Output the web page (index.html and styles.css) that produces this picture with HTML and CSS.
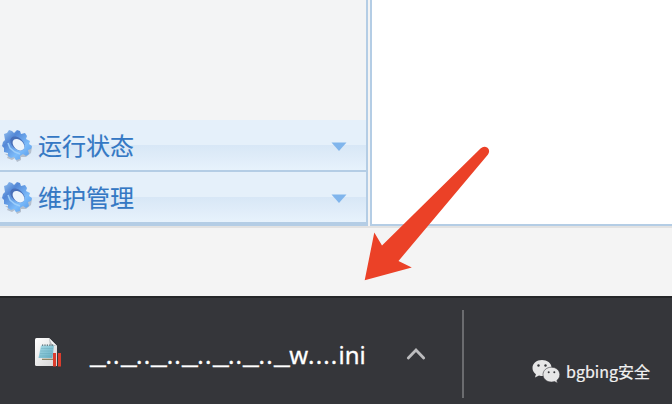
FILE: index.html
```html
<!DOCTYPE html>
<html lang="zh-CN">
<head>
<meta charset="utf-8">
<title>运行状态</title>
<link rel="stylesheet" href="styles.css">
</head>
<body>
<svg width="0" height="0" class="defs" aria-hidden="true">
  <defs>
    <linearGradient id="gearFill" x1="0" y1="0" x2="1" y2="1">
      <stop offset="0" stop-color="#9ac8f4"/><stop offset=".3" stop-color="#5488d6"/><stop offset=".65" stop-color="#7cbcfb"/><stop offset="1" stop-color="#4f94e6"/>
    </linearGradient>
    <linearGradient id="paper" x1="0" y1="0" x2="1" y2="1"><stop offset="0" stop-color="#fff"/><stop offset="1" stop-color="#d4d4d4"/></linearGradient>
    <linearGradient id="note" x1="0" y1="0" x2="1" y2="1"><stop offset="0" stop-color="#a7dae6"/><stop offset="1" stop-color="#63aec3"/></linearGradient>
    <filter id="soft" x="-10%" y="-10%" width="120%" height="120%"><feGaussianBlur stdDeviation=".7"/></filter>
    <symbol id="gear" viewBox="0 0 34 34">
      <g filter="url(#soft)">
        <path fill="#b4bfcd" d="M5 25 8 27 7 29 12 31 15 29 17 33 21 31 21 28 26 28 31 24 32 18 29 16 22 24 12 25Z"/>
        <path fill="url(#gearFill)" d="M4 5 7 4 9 1 12 2 14 4 17 1 20 2 21 5 25 4 27 7 26 10 30 12 29 15 32 17 31 20 28 21 29 25 26 27 23 25 20 27 20 30 16 31 14 28 11 29 8 27 8 24 4 23 4 19 2 17 3 13 5 11Z"/>
        <ellipse cx="17.500" cy="14.500" rx="8.300" ry="5.600" transform="rotate(43 17.500 14.500)" fill="#496fb8"/>
        <ellipse cx="18.500" cy="15.700" rx="6.800" ry="4.700" transform="rotate(43 18.500 15.700)" fill="#ecf4fc"/>
        <path fill="none" stroke="#9dcefb" stroke-width="1.500" d="M8 14 10 19 15 23 20 25"/>
      </g>
    </symbol>
  </defs>
</svg>
<div class="screen">
  <div class="workspace">
    <nav class="sidebar">
      <div class="menu-item"><svg class="gear"><use href="#gear"/></svg><span>运行状态</span><svg class="caret" viewBox="0 0 16 10"><path d="M.5 .5H15.500L8 9Z"/></svg></div>
      <div class="menu-item"><svg class="gear"><use href="#gear"/></svg><span>维护管理</span><svg class="caret" viewBox="0 0 16 10"><path d="M.5 .5H15.500L8 9Z"/></svg></div>
    </nav>
    <main class="content"></main>
  </div>
  <div class="page-footer"></div>
  <footer class="downloads">
    <svg class="file-icon" viewBox="0 0 28 30">
      <path fill="url(#paper)" d="M1.500 0H14L22 8V28H1.500Q0 28 0 26.500V1.500Q0 0 1.500 0Z"/>
      <path fill="#b9bdbf" d="M14 0 15 8H22Z"/><path fill="#f6f6f6" d="M14 0 17 6 22 8Z"/>
      <path fill="#857c57" d="M7 20.700H18V21.900H7Z"/>
      <path fill="url(#note)" d="M6 7.500H19L17.500 20H3.500Z"/>
      <path stroke="#5c9fb0" stroke-width=".35" d="M6 10.500H18M5.500 13H17.500M5 15.500H17M5 18H17"/>
      <path stroke="#4a616a" stroke-width="1.200" stroke-dasharray="1.200 1.200" d="M7 7.200H19"/>
      <path fill="#db3d2d" d="M18 15H21V28.600H18ZM23 15H26V28.600H23Z"/>
    </svg>
    <div class="filename"><i>_</i><b>..</b><i>_</i><b>..</b><i>_</i><b>..</b><i>_</i><b>..</b><i>_</i><b>..</b><i>_</i><b>..</b><i>_</i><span>w</span><b>....</b><span>ini</span></div>
    <svg class="chevron" viewBox="0 0 20 14"><path d="M2.300 11 10 3 17.700 11"/></svg>
    <div class="divider"></div>
    <div class="account">
      <svg viewBox="0 0 28 25">
        <path fill="#e6e6e6" d="M10 1C4.500 1 .5 4.500.5 9c0 2.700 1.400 4.700 3.400 6.200L3 18.500l4-2c1.200.4 2.500.5 4 .5 5 0 8.500-4 8.500-8.500C19.500 4 15 1 10 1Z"/>
        <path fill="#e6e6e6" stroke="#35363a" stroke-width=".6" d="M19.500 8.200c-4.900 0-8.500 3.300-8.500 7.400s3.600 7.500 8.500 7.500c1.100 0 2.100-.2 3.100-.5l3 1.700-.8-2.800c1.700-1.300 3-3.200 3-5.900 0-4-3.600-7.400-8.300-7.400Z"/>
        <g fill="#35363a"><circle cx="6.500" cy="6.500" r="1.200"/><circle cx="13.500" cy="6.500" r="1.200"/><circle cx="16.700" cy="13.200" r="1"/><circle cx="22.300" cy="13.200" r="1"/></g>
      </svg>
      <span>bgbing安全</span>
    </div>
  </footer>
  <svg class="arrow" viewBox="0 0 672 404"><path d="M364.700 280.300 374.300 232.500 382 245.500 480.500 148.500Q484 145.500 487.500 147.800 490.500 150.500 488 154.500L398.500 261 411.800 267.500Z"/></svg>
</div>
</body>
</html>
```
FILE: styles.css
```css
* { box-sizing: border-box; }
body { margin: 0; background: #f4f4f4; font-family: "Noto Sans", "Noto Sans CJK SC", sans-serif; }
.defs { position: absolute; }
.screen { position: relative; width: 672px; height: 404px; overflow: hidden; }
.workspace { display: flex; gap: 2px; height: 228px; border-bottom: 2px solid #e2e2e2; }
.sidebar { display: flex; flex-direction: column; justify-content: flex-end; width: 368px; border-right: 2px solid #b4cde5; border-bottom: 2px solid #b4cde5; background: #f3f4f5; }
.menu-item { display: flex; align-items: center; height: 52px; padding: 0 19px 0 0; border-bottom: 2px solid #b4cde5; background: linear-gradient(#e5f0fa 0 50%, #d8e7f6 51%, #e7f2fc 100%); color: #3478c4; font: 24px/48px "Noto Sans CJK SC", sans-serif; }
.menu-item span { padding-bottom: 1px; -webkit-text-stroke: .15px #3478c4; }
.gear { width: 34px; height: 34px; margin: 2px 4px 0 0; }
.caret { width: 16px; height: 10px; margin-left: auto; margin-top: 3px; fill: #80b5ec; }
.content { flex: 1; border-left: 2px solid #b4cde5; border-bottom: 2px solid #b4cde5; background: #fff; }
.page-footer { height: 68px; background: #f4f4f4; }
.downloads { display: flex; height: 108px; border-top: 2px solid #252628; background: #35363a; color: #fff; }
.file-icon { width: 28px; height: 30px; margin: 40px 0 0 35px; }
.filename { width: 276px; margin: 40px 0 0 27px; white-space: nowrap; font: 24px/34px "Noto Sans", sans-serif; -webkit-text-stroke: .3px #fff; }
.filename i { display: inline-block; width: 15.4px; font-style: normal; transform: translateY(-1px) scaleX(1.48); transform-origin: left; }
.filename b { font-weight: 400; letter-spacing: 1.18px; }
.chevron { width: 20px; height: 14px; margin: 49px 0 0 40px; fill: none; stroke: #bcbcbe; stroke-width: 2.8; stroke-linecap: round; }
.divider { width: 2px; height: 88px; margin: 12px 0 0 36px; background: #6b6c6f; }
.account { display: flex; margin: 61px 0 0 68px; color: #f1f1f1; font: 16px/24px "Noto Sans CJK SC", sans-serif; white-space: nowrap; -webkit-text-stroke: .2px #f1f1f1; }
.account svg { width: 28px; height: 25px; margin: 0 6px 0 0; }
.arrow { position: absolute; inset: 0; width: 672px; height: 404px; fill: #eb4127; pointer-events: none; }
```
